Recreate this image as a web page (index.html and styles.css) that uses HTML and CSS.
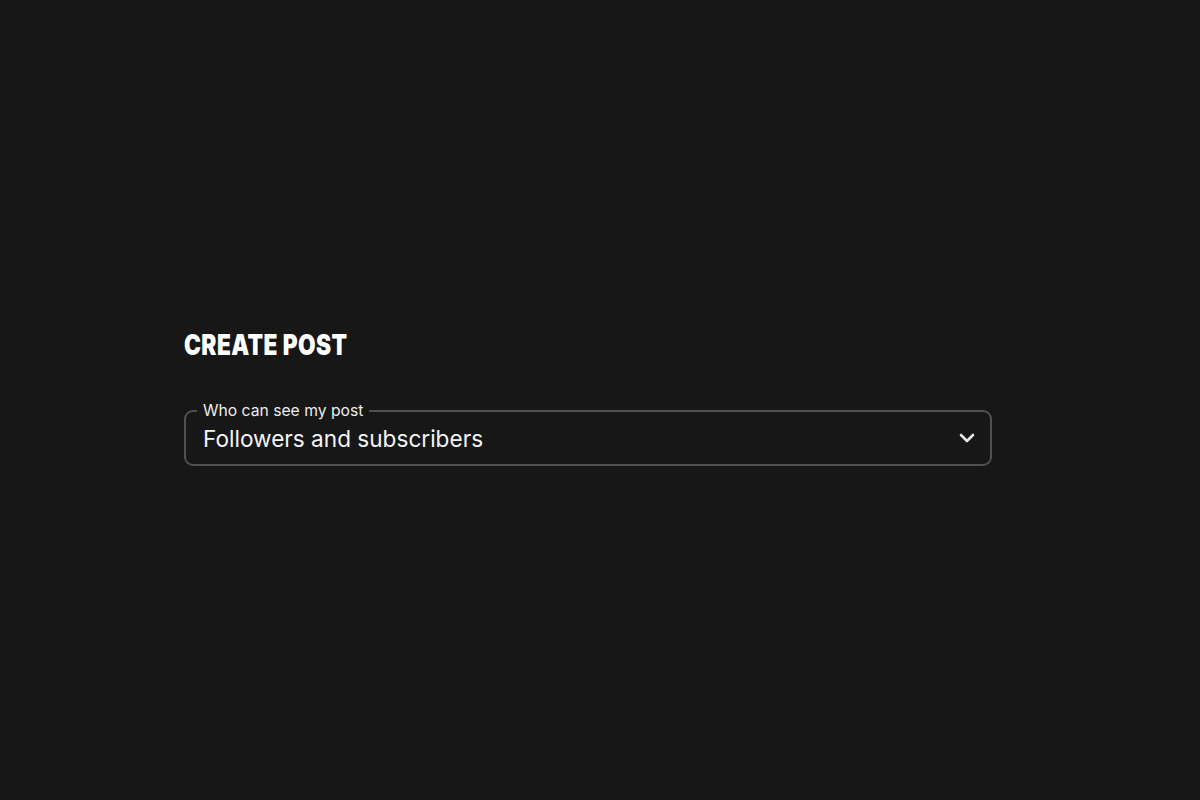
FILE: index.html
```html
<!DOCTYPE html>
<html lang="en">
<head>
    <meta charset="UTF-8">
    <title>Create post</title>
    <link rel="stylesheet" href="styles.css">
</head>
<body>
    <main class="page">
        <section class="post-form">
            <h1 class="title">CREATE POST</h1>
            <fieldset class="select-field">
                <legend class="select-label">Who can see my post</legend>
                <div class="select-value">
                    <span>Followers and subscribers</span>
                    <svg class="chevron" width="20" height="20" viewBox="0 0 20 20" aria-hidden="true">
                        <path d="M4 7 L10 13 L16 7" fill="none" stroke="#e6e6e6" stroke-width="2.6" stroke-linecap="round" stroke-linejoin="round"/>
                    </svg>
                </div>
            </fieldset>
        </section>
    </main>
</body>
</html>
```

FILE: styles.css
```css
html, body {
    margin: 0;
    height: 100%;
}
body {
    background: #171717;
    color: #f2f2f2;
    font-family: Inter, "Noto Sans", sans-serif;
}

.page {
    display: flex;
    align-items: center;
    height: 100%;
    padding-left: 184px;
    box-sizing: border-box;
}

.post-form {
    width: 808px;
    margin-top: -6px;
}

/* titre : police condensée simulée */
.title {
    margin: 0 0 40px;
    font-size: 28px;
    font-weight: 900;
    letter-spacing: 0.5px;
    line-height: 34px;
    color: #fff;
    transform: scaleX(0.81);
    transform-origin: left center;
}

/* champ select avec legend */
.select-field {
    margin: 0;
    padding: 0 13px 8px 11px;
    border: 2px solid #505050;
    border-radius: 9px;
    height: 64px;
    box-sizing: border-box;
}
.select-label {
    padding: 0 6px;
    font-size: 15.7px;
    line-height: 18px;
    color: #ececec;
}
.select-value {
    display: flex;
    align-items: center;
    justify-content: space-between;
    padding-left: 6px;
    height: 36px;
    font-size: 22.6px;
    color: #f4f4f4;
}
.chevron {
    display: block;
}
```
